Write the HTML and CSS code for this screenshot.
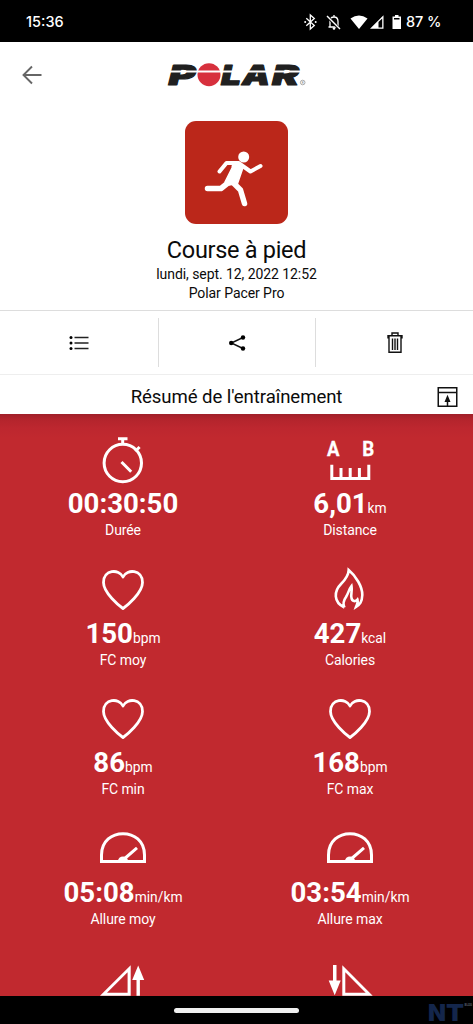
FILE: index.html
```html
<!DOCTYPE html>
<html lang="fr">
<head>
<meta charset="utf-8">
<title>Course à pied</title>
<link rel="stylesheet" href="styles.css">
</head>
<body>
<div class="screen">
  <header class="status">
    <span class="clock">15:36</span>
    <svg class="status-icons" width="103" height="20" viewBox="0 0 103 20" fill="#fff">
      <path d="M6 6.200l8 7.300-4 3.500V3l4 3.500-8 7.300" transform="translate(.3 0)" fill="none" stroke="#fff" stroke-width="1.300"/>
      <circle cx="5.200" cy="10" r="1"/><circle cx="15.700" cy="10" r="1"/>
      <path d="M28.500 15h10.500M30 15V9.500q0-4.500 4-4.500t4 4.500V15M34 3v2" fill="none" stroke="#fff" stroke-width="1.300"/>
      <circle cx="34" cy="16.500" r="1.300"/>
      <path d="M27.500 4.500l12 12.500" stroke="#000" stroke-width="3"/>
      <path d="M27 4l13 13" stroke="#fff" stroke-width="1.400"/>
      <path d="M50.500 6.500Q59 .5 67.500 6.500L59 17z"/>
      <path d="M70 16.800L83.500 3.300V16.800zM78.500 10v5.500h3.700V6.400z" fill-rule="evenodd"/>
      <path d="M95 3h3.500v1.500H101V17h-8.500V4.500H95zM94 6v1.500h5.500V6z" fill-rule="evenodd"/>
    </svg>
    <span class="battery">87 %</span>
  </header>

  <section class="hero">
    <div class="appbar">
      <svg class="back" width="22" height="20" viewBox="0 0 22 20" fill="none" stroke="#666" stroke-width="1.900"><path d="M19.500 10H2M10 1.500L1.500 10l8.500 8.500"/></svg>
      <svg class="logo" width="140" height="26" viewBox="0 0 140 26">
        <g class="logo-text">
          <text x="1.500" y="22.500" textLength="27" lengthAdjust="spacingAndGlyphs">P</text>
          <text x="54" y="22.500" textLength="20" lengthAdjust="spacingAndGlyphs">L</text>
          <text x="75" y="22.500" textLength="28" lengthAdjust="spacingAndGlyphs">A</text>
          <text x="105" y="22.500" textLength="27" lengthAdjust="spacingAndGlyphs">R</text>
        </g>
        <circle cx="42" cy="12.700" r="11.500" fill="#d7303d"/>
        <path d="M0 9.500h134" stroke="#fff" stroke-width="1.800"/>
        <circle cx="135.700" cy="20.500" r="2.300" fill="none" stroke="#888" stroke-width=".7"/>
        <text class="reg" x="134.700" y="21.600">R</text>
      </svg>
    </div>
    <div class="sport">
      <svg width="104" height="104" viewBox="0 0 104 104" fill="none" stroke="#fff" stroke-linecap="round" stroke-linejoin="round">
        <circle cx="58.700" cy="36" r="5.500" fill="#fff" stroke="none"/>
        <path d="M34.500 50.500l7-8.500h12l12 8.500L75.500 45" stroke-width="4"/>
        <path d="M48 42h7L58 46.500l-5.500 16-8.500 1.500-4-3 7-14z" fill="#fff" stroke-width="1.500"/>
        <path d="M22.500 67.500H36L46 59.500l9.500 9.500 4 13.500" stroke-width="5.500"/>
      </svg>
    </div>
    <h1>Course à pied</h1>
    <p>lundi, sept. 12, 2022 12:52</p>
    <p>Polar Pacer Pro</p>
  </section>

  <nav class="actions">
    <div class="action">
      <svg width="24" height="24" viewBox="0 0 24 24" fill="#000"><path d="M7.500 6.500h14M7.500 12h14M7.500 17.500h14" stroke="#222" stroke-width="1.600"/><circle cx="4" cy="6.500" r="1.500"/><circle cx="4" cy="12" r="1.500"/><circle cx="4" cy="17.500" r="1.500"/></svg>
    </div>
    <div class="action">
      <svg width="24" height="24" viewBox="0 0 24 24" fill="#000"><path d="M18 6.500L6.300 12 18 17.500" fill="none" stroke="#111" stroke-width="1.400"/><circle cx="6.200" cy="12" r="2.200"/><circle cx="18" cy="6.500" r="2.200"/><circle cx="18" cy="17.500" r="2.200"/></svg>
    </div>
    <div class="action">
      <svg width="24" height="24" viewBox="0 0 24 24" fill="none" stroke="#111" stroke-width="1.400"><path d="M5 7.500V4.700h14v2.800M6 5v16.200h12V5M9 4.500V2h6V4.500M9.500 7.500V19M12 7.500V19M14.500 7.500V19"/></svg>
    </div>
  </nav>

  <div class="summary">
    <h2>Résumé de l'entraînement</h2>
    <svg class="share-up" width="22" height="22" viewBox="0 0 22 22" fill="none" stroke="#111" stroke-width="1.500"><path d="M2.250 1.750h18.500v18.500H2.250zM2.250 6.500h18.500M11.500 20v-6"/><path d="M11.500 8.800l3 7.200h-6z" fill="#111" stroke="none"/></svg>
  </div>

  <main class="metrics">
    <div class="metric">
      <svg width="60" height="52" viewBox="0 0 60 52" fill="none" stroke="#fff" stroke-width="3"><circle cx="29.800" cy="27" r="18.700"/><path d="M25 2.700h9.500M29.700 3v5M42.300 15.300l4.300-4.300M28.500 26l9.700 9.700"/></svg>
      <div class="value">00:30:50</div><div class="label">Durée</div>
    </div>
    <div class="metric">
      <svg class="ab" width="60" height="52" viewBox="0 0 60 52" fill="none" stroke="#fff" stroke-width="3"><text x="7" y="19.500" textLength="12.500" lengthAdjust="spacingAndGlyphs">A</text><text x="42.300" y="19.500" textLength="12" lengthAdjust="spacingAndGlyphs">B</text><path d="M11.800 28.700v13.800h37V28.700M21 32v10M30.200 32v10M39.400 32v10"/></svg>
      <div class="value">6,01<small>km</small></div><div class="label">Distance</div>
    </div>
    <div class="metric">
      <svg width="60" height="52" viewBox="0 0 60 52" class="line"><path d="M30 42.500C26.500 40 10.500 27 10.500 16.500C10.500 3.500 26 2.500 30 11C34 2.500 49.500 3.500 49.500 16.500C49.500 27 33.500 40 30 42.500z"/></svg>
      <div class="value">150<small>bpm</small></div><div class="label">FC moy</div>
    </div>
    <div class="metric">
      <svg width="60" height="52" viewBox="0 0 60 52" class="line flame"><path d="M24.500 41.500C13 36 14 25 21 18C26 13 28.500 9.500 28.700 4C36 10 42.500 21 42.300 29C42 36 40 38.500 36 41C37 38 38.500 36 37.500 33.500C35.500 36 32 35.500 31.500 32C30.500 28 32.500 25 31.500 20C29 23 28.500 27 26 31C23.500 34.500 22.500 37.500 24.500 41.500"/></svg>
      <div class="value">427<small>kcal</small></div><div class="label">Calories</div>
    </div>
    <div class="metric">
      <svg width="60" height="52" viewBox="0 0 60 52" class="line"><path d="M30 42.500C26.500 40 10.500 27 10.500 16.500C10.500 3.500 26 2.500 30 11C34 2.500 49.500 3.500 49.500 16.500C49.500 27 33.500 40 30 42.500z"/></svg>
      <div class="value">86<small>bpm</small></div><div class="label">FC min</div>
    </div>
    <div class="metric">
      <svg width="60" height="52" viewBox="0 0 60 52" class="line"><path d="M30 42.500C26.500 40 10.500 27 10.500 16.500C10.500 3.500 26 2.500 30 11C34 2.500 49.500 3.500 49.500 16.500C49.500 27 33.500 40 30 42.500z"/></svg>
      <div class="value">168<small>bpm</small></div><div class="label">FC max</div>
    </div>
    <div class="metric">
      <svg width="60" height="52" viewBox="0 0 60 52" fill="none" stroke="#fff" stroke-width="3"><path d="M8.500 36.500V30C8.500 1.500 51.500 1.500 51.500 30V36.500zM30 35L44 22.800"/><path d="M25 36a5 4.500 0 0 1 10 0z" fill="#fff" stroke="none"/></svg>
      <div class="value">05:08<small>min/km</small></div><div class="label">Allure moy</div>
    </div>
    <div class="metric">
      <svg width="60" height="52" viewBox="0 0 60 52" fill="none" stroke="#fff" stroke-width="3"><path d="M8.500 36.500V30C8.500 1.500 51.500 1.500 51.500 30V36.500zM30 35L44 22.800"/><path d="M25 36a5 4.500 0 0 1 10 0z" fill="#fff" stroke="none"/></svg>
      <div class="value">03:54<small>min/km</small></div><div class="label">Allure max</div>
    </div>
    <div class="metric">
      <svg width="60" height="52" viewBox="0 0 60 52" fill="#fff"><path d="M7 40.700L37.700 10.300v30.400zM14 37.800h20.600V17.300zM43.500 40.700V25h-4.300l6-14.500 6 14.500h-4.300v15.700z" fill-rule="evenodd"/></svg>
    </div>
    <div class="metric">
      <svg width="60" height="52" viewBox="0 0 60 52" fill="#fff"><path d="M52.700 40.700L22.300 10.300v30.400zM45.700 37.800H25.300V17.300zM13 10v15.500H8.700l6 14.800 6-14.800h-4.200V10z" fill-rule="evenodd"/></svg>
    </div>
  </main>

  <footer class="navbar">
    <span class="home"></span>
    <svg class="mark" width="48" height="28" viewBox="0 0 48 28"><text x="3" y="25" textLength="18" lengthAdjust="spacingAndGlyphs">N</text><text x="21" y="25" textLength="18" lengthAdjust="spacingAndGlyphs">T</text><text class="blog" x="39.500" y="9.500" textLength="7.500" lengthAdjust="spacingAndGlyphs">BLOG</text></svg>
  </footer>
</div>
</body>
</html>
```
FILE: styles.css
```css
* { box-sizing: border-box; margin: 0; padding: 0; }
body { font-family: Roboto, "Liberation Sans", sans-serif; background: #000; color: #0b0b0b; }
svg { display: block; flex: none; overflow: visible; }
.screen { width: 473px; height: 1024px; display: flex; flex-direction: column; overflow: hidden; }

.status { height: 42px; flex: none; display: flex; align-items: center; padding: 1px 32px 0 26px; color: #fff; font: 500 14.500px/41px Inter, sans-serif; }
.status-icons { margin-left: auto; }
.battery { width: 35px; margin-left: 3px; white-space: nowrap; letter-spacing: -.1px; }

.hero { height: 268px; flex: none; background: #fff; text-align: center; display: flex; flex-direction: column; align-items: center; }
.appbar { width: 100%; height: 79px; display: grid; grid-template-columns: 145px 1fr; padding: 20px 0 0 22px; }
.back { margin-top: 3px; }
.logo-text { font: italic 900 27px Inter, Roboto, sans-serif; fill: #202020; stroke: #202020; stroke-width: 1; stroke-linejoin: round; }
.reg { font: 3px Roboto, sans-serif; fill: #777; }
.sport { width: 103px; height: 103px; border-radius: 11px; background: #bb271a; }
h1 { font-size: 23.500px; font-weight: 400; letter-spacing: -.3px; line-height: 30px; margin-top: 11px; }
p { font-size: 14px; letter-spacing: -.07px; line-height: 19px; }

.actions { height: 65px; flex: none; display: grid; grid-template-columns: repeat(3, 1fr); background: #fff; border-top: 1px solid #ddd; border-bottom: 1px solid #eee; padding: 7px 0; }
.action { display: flex; align-items: center; justify-content: center; }
.action + .action { border-left: 1px solid #ddd; }

.summary { height: 39px; flex: none; display: grid; grid-template-columns: 37px 1fr 37px; align-items: center; background: #fff; }
h2 { grid-column: 2; text-align: center; font-size: 18.600px; font-weight: 400; letter-spacing: -.08px; line-height: 38px; padding-top: 3px; }
.share-up { margin-top: 3px; }

.metrics { flex: 1; min-height: 0; overflow: hidden; display: grid; grid-template-columns: 227px 227px; grid-auto-rows: 129.700px; justify-content: center; padding-top: 22px; color: #fff; background: linear-gradient(#9f2029, #b3242c 5px, #bd272f 14px, #c1292f 24px); }
.metric { display: flex; flex-direction: column; align-items: center; }
.value { height: 32px; font-size: 27.600px; font-weight: 700; line-height: 32px; white-space: nowrap; }
.value small { font-size: 13.800px; font-weight: 400; line-height: 1; }
.label { font-size: 14px; letter-spacing: -.1px; line-height: 20px; }
.line { fill: none; stroke: #fff; stroke-width: 2.800; stroke-linejoin: round; }
.flame { stroke-linejoin: miter; stroke-width: 2.600; }
.ab text { font: 700 21px Roboto, sans-serif; fill: #fff; stroke: #fff; stroke-width: .3; }

.navbar { height: 28px; flex: none; display: grid; grid-template-columns: 1fr 125px 1fr; background: #000; align-items: center; }
.home { grid-column: 2; height: 5px; border-radius: 3px; background: #f0f0f0; }
.mark { justify-self: end; }
.mark text { font: 900 23px Inter, sans-serif; fill: #14264b; }
.mark .blog { font: 700 4px Roboto, sans-serif; fill: #555b66; }
```
